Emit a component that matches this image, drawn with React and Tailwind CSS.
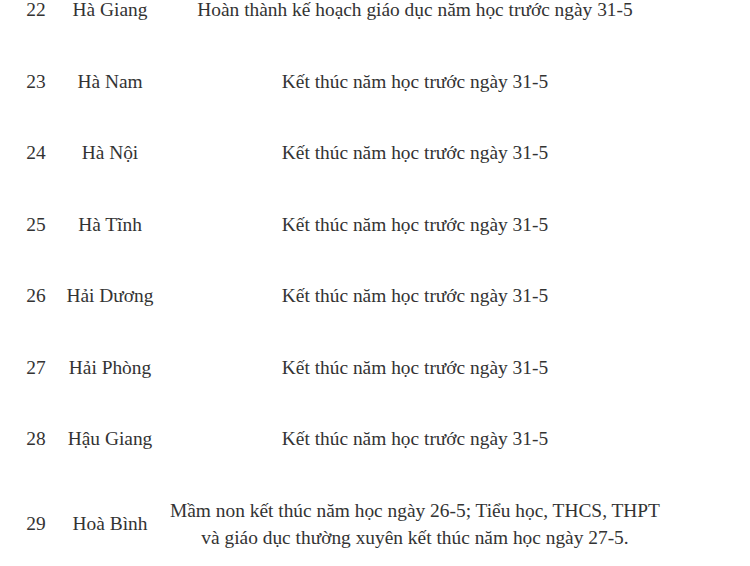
const rows = [
  { no: 22, name: 'Hà Giang', note: ['Hoàn thành kế hoạch giáo dục năm học trước ngày 31-5'] },
  { no: 23, name: 'Hà Nam', note: ['Kết thúc năm học trước ngày 31-5'] },
  { no: 24, name: 'Hà Nội', note: ['Kết thúc năm học trước ngày 31-5'] },
  { no: 25, name: 'Hà Tĩnh', note: ['Kết thúc năm học trước ngày 31-5'] },
  { no: 26, name: 'Hải Dương', note: ['Kết thúc năm học trước ngày 31-5'] },
  { no: 27, name: 'Hải Phòng', note: ['Kết thúc năm học trước ngày 31-5'] },
  { no: 28, name: 'Hậu Giang', note: ['Kết thúc năm học trước ngày 31-5'] },
  {
    no: 29,
    name: 'Hoà Bình',
    note: [
      'Mầm non kết thúc năm học ngày 26-5; Tiểu học, THCS, THPT',
      'và giáo dục thường xuyên kết thúc năm học ngày 27-5.',
    ],
  },
];

const App = () => {
  return (
    <div className="w-[750px] h-[566px] overflow-hidden bg-white text-[#333] font-['Liberation_Serif','Times_New_Roman',serif] text-[19.4px] leading-[27px]">
      <div className="-mt-[26px]">
        {rows.map((r) => (
          <div key={r.no} className="grid grid-cols-[72px_76px_534px] items-center py-[22.25px]">
            <div className="flex justify-center">{r.no}</div>
            <div className="flex justify-center whitespace-nowrap">{r.name}</div>
            <div className="flex flex-col items-center text-center whitespace-nowrap">
              {r.note.map((line) => (
                <span key={line}>{line}</span>
              ))}
            </div>
          </div>
        ))}
      </div>
    </div>
  );
};

export default App;
